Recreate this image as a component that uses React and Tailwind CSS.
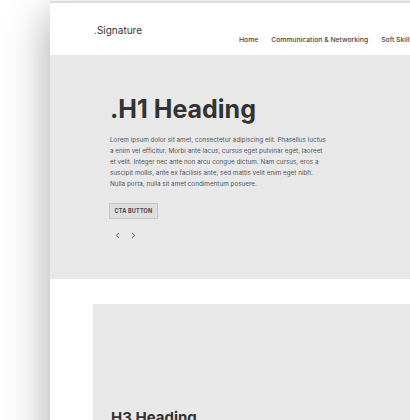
import { ChevronLeft, ChevronRight } from 'lucide-react';

const navItems = ['Home', 'Communication & Networking', 'Soft Skills', 'Leadership'];

const lines = [
  'Lorem ipsum dolor sit amet, consectetur adipiscing elit. Phasellus luctus',
  'a enim vel efficitur. Morbi ante lacus, cursus eget pulvinar eget, laoreet',
  'et velit. Integer nec ante non arcu congue dictum. Nam cursus, eros a',
  'suscipit mollis, ante ex facilisis ante, sed mattis velit enim eget nibh.',
  'Nulla porta, nulla sit amet condimentum posuere.',
];

export default function App() {
  return (
    <div className="h-[420px] w-[410px] overflow-hidden bg-white font-['Inter',sans-serif]">
      <div className="ml-[50px] mt-px w-[520px] bg-white shadow-[-6px_12px_36px_rgba(0,0,0,0.28)]">
        <div className="h-[2px] bg-[#dcdcdc]" />

        <header className="flex h-[52px] items-start pl-[44px] pr-4">
          <div className="mt-[20px] text-[10px] text-[#333]">.Signature</div>
          <nav className="ml-[97px] mt-[32px] flex gap-[13px] whitespace-nowrap text-[6.8px] font-medium text-[#444]">
            {navItems.map((item) => (
              <span key={item}>{item}</span>
            ))}
          </nav>
        </header>

        <section className="h-[224px] bg-[#e8e8e8] pl-[60px] pt-[38px]">
          <h1 className="text-[25px] font-bold leading-[32px] text-[#333]">.H1 Heading</h1>
          <p className="mt-[10px] whitespace-nowrap text-[6.35px] leading-[11px] text-[#555]">
            {lines.map((line) => (
              <span key={line} className="block">{line}</span>
            ))}
          </p>
          <button className="mt-[13px] -ml-px flex h-[16px] w-[49px] items-center justify-center border border-[#c6c6c6] bg-[#dedede] text-[5.5px] font-bold tracking-[0.2px] text-[#444]">
            CTA BUTTON
          </button>
          <div className="ml-[3px] mt-[12px] flex gap-[7px] text-[#333]">
            <ChevronLeft size={9} strokeWidth={2.2} />
            <ChevronRight size={9} strokeWidth={2.2} />
          </div>
        </section>

        <div className="h-[25px] bg-white" />

        <section className="ml-[43px] h-[200px] bg-[#e8e8e8] pl-[13px] pt-[105px]">
          <h3 className="text-[15px] font-bold leading-[18px] text-[#333]">.H3 Heading</h3>
        </section>
      </div>
    </div>
  );
}
